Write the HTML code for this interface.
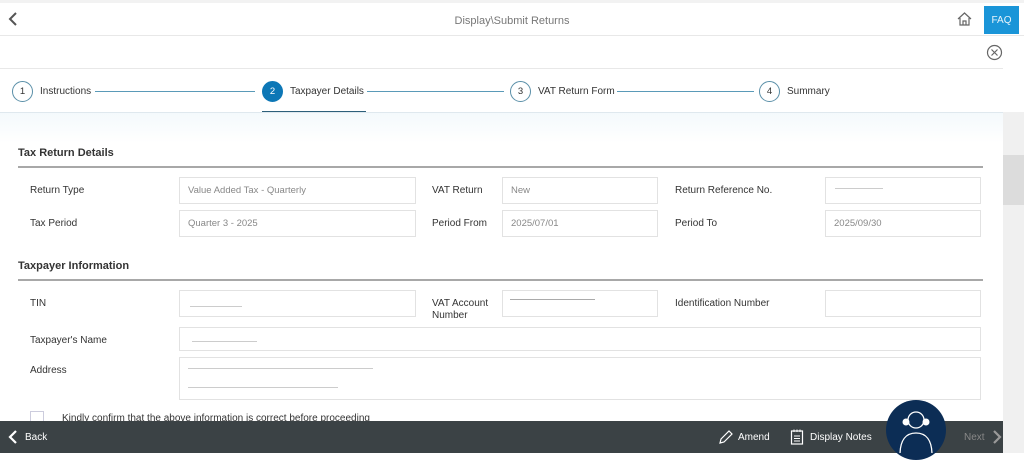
<!DOCTYPE html><html><head><style>
*{box-sizing:border-box;margin:0;padding:0}
body{width:1024px;height:453px;overflow:hidden;background:#fff;font-family:"Liberation Sans",sans-serif;position:relative;color:#333}
.a{position:absolute}
.lbl{position:absolute;font-size:10px;color:#333;line-height:12px}
.in{position:absolute;border:1px solid #e2e2e2;background:#fff;font-size:9.5px;color:#888;padding-left:8px;display:flex;align-items:center}
.h{position:absolute;font-size:11px;font-weight:bold;color:#333}
.ln{position:absolute;left:18px;width:965px;height:2px;background:#a8a8a8}
.step{position:absolute;top:81px;font-size:10px;color:#333;display:flex;align-items:center}
.c{width:21px;height:21px;border-radius:50%;border:1px solid #5a8fa8;display:flex;align-items:center;justify-content:center;font-size:9.5px;margin-right:7px;background:#fff}
.sl{position:absolute;top:91px;height:1px;background:#5a9ab8}
.blur{position:absolute;height:1px;background:#ccc}
</style></head><body>
<div class="a" style="left:0;top:0;width:1024px;height:3px;background:#f2f2f2"></div>
<div class="a" style="left:0;top:35px;width:1024px;height:1px;background:#e8e8e8"></div>
<svg class="a" style="left:7px;top:11px" width="12" height="16"><path d="M9 2L3 8L9 14" stroke="#555" stroke-width="2" fill="none"/></svg>
<div class="a" style="left:0;width:1024px;top:15px;text-align:center;font-size:11px;color:#777">Display\Submit Returns</div>
<svg class="a" style="left:956px;top:11px" width="17" height="16"><path d="M2 8L8.5 2L15 8M4 7V14H13V7M7 14V10H10V14" stroke="#666" stroke-width="1.2" fill="none"/></svg>
<div class="a" style="left:984px;top:6px;width:35px;height:28px;background:#1a95d8;color:#e8f4fb;font-size:10px;display:flex;align-items:center;justify-content:center">FAQ</div>
<div class="a" style="left:0;top:68px;width:1003px;height:1px;background:#e8e8e8"></div>
<svg class="a" style="left:986px;top:44px" width="17" height="17"><circle cx="8.5" cy="8.5" r="7" stroke="#666" stroke-width="1.2" fill="none"/><path d="M5.5 5.5L11.5 11.5M11.5 5.5L5.5 11.5" stroke="#666" stroke-width="1.2"/></svg>
<div class="sl" style="left:95px;width:160px"></div>
<div class="sl" style="left:367px;width:137px"></div>
<div class="sl" style="left:617px;width:137px"></div>
<div class="step" style="left:12px"><div class="c">1</div>Instructions</div>
<div class="step" style="left:262px"><div class="c" style="background:#0d77b6;border-color:#0d77b6;color:#fff">2</div>Taxpayer Details</div>
<div class="step" style="left:510px"><div class="c">3</div>VAT Return Form</div>
<div class="step" style="left:759px"><div class="c">4</div>Summary</div>
<div class="a" style="left:262px;top:111px;width:104px;height:2px;background:#2d5f7a"></div>
<div class="a" style="left:0;top:112px;width:1003px;height:1px;background:#dfe8ee"></div>
<div class="a" style="left:0;top:113px;width:1003px;height:30px;background:linear-gradient(#f4f9fc,#fff)"></div>
<div class="a" style="left:1003px;top:112px;width:21px;height:309px;background:#f0f0f0"></div>
<div class="a" style="left:1003px;top:155px;width:21px;height:50px;background:#dcdcdc"></div>
<div class="h" style="left:18px;top:147px">Tax Return Details</div>
<div class="ln" style="top:166px"></div>
<div class="lbl" style="left:30px;top:185px">Return Type</div>
<div class="in" style="left:179px;top:177px;width:237px;height:27px">Value Added Tax - Quarterly</div>
<div class="lbl" style="left:432px;top:185px">VAT Return</div>
<div class="in" style="left:502px;top:177px;width:156px;height:27px">New</div>
<div class="lbl" style="left:675px;top:185px">Return Reference No.</div>
<div class="in" style="left:825px;top:177px;width:156px;height:27px"></div>
<div class="blur" style="left:835px;top:188px;width:48px"></div>
<div class="lbl" style="left:30px;top:218px">Tax Period</div>
<div class="in" style="left:179px;top:210px;width:237px;height:27px">Quarter 3 - 2025</div>
<div class="lbl" style="left:432px;top:218px">Period From</div>
<div class="in" style="left:502px;top:210px;width:156px;height:27px">2025/07/01</div>
<div class="lbl" style="left:675px;top:218px">Period To</div>
<div class="in" style="left:825px;top:210px;width:156px;height:27px">2025/09/30</div>
<div class="h" style="left:18px;top:260px">Taxpayer Information</div>
<div class="ln" style="top:279px"></div>
<div class="lbl" style="left:30px;top:298px">TIN</div>
<div class="in" style="left:179px;top:290px;width:237px;height:27px"></div>
<div class="blur" style="left:190px;top:306px;width:52px"></div>
<div class="lbl" style="left:432px;top:298px">VAT Account<br>Number</div>
<div class="in" style="left:502px;top:290px;width:156px;height:27px"></div>
<div class="blur" style="left:510px;top:299px;width:85px;background:#aaa"></div>
<div class="lbl" style="left:675px;top:298px">Identification Number</div>
<div class="in" style="left:825px;top:290px;width:156px;height:27px"></div>
<div class="lbl" style="left:30px;top:335px">Taxpayer's Name</div>
<div class="in" style="left:179px;top:327px;width:802px;height:24px"></div>
<div class="blur" style="left:192px;top:341px;width:65px"></div>
<div class="lbl" style="left:30px;top:365px">Address</div>
<div class="in" style="left:179px;top:357px;width:802px;height:43px"></div>
<div class="blur" style="left:188px;top:368px;width:185px"></div>
<div class="blur" style="left:188px;top:387px;width:150px"></div>
<div class="a" style="left:30px;top:411px;width:14px;height:12px;border:1px solid #ccd;background:#fff"></div>
<div class="a" style="left:62px;top:413px;font-size:10px;color:#333">Kindly confirm that the above information is correct before proceeding</div>
<div class="a" style="left:0;top:421px;width:1003px;height:32px;background:#3b4245"></div>
<svg class="a" style="left:7px;top:429px" width="12" height="16"><path d="M9 2L3 8L9 14" stroke="#fff" stroke-width="2.2" fill="none"/></svg>
<div class="a" style="left:25px;top:432px;font-size:10px;color:#fff">Back</div>
<svg class="a" style="left:718px;top:429px" width="16" height="16"><path d="M2 14L3 10L11 2L14 5L6 13Z" stroke="#fff" stroke-width="1.2" fill="none"/></svg>
<div class="a" style="left:738px;top:432px;font-size:10px;color:#fff">Amend</div>
<svg class="a" style="left:790px;top:428px" width="14" height="18"><rect x="1.5" y="3" width="11" height="13" stroke="#fff" stroke-width="1.2" fill="none"/><path d="M4 1.5V4M7 1.5V4M10 1.5V4M4 8H10M4 10.5H10M4 13H10" stroke="#fff" stroke-width="1"/></svg>
<div class="a" style="left:810px;top:432px;font-size:10px;color:#fff">Display Notes</div>
<div class="a" style="left:886px;top:400px;width:60px;height:60px;border-radius:50%;background:#0c2d55"></div>
<svg class="a" style="left:886px;top:400px" width="60" height="53"><circle cx="30" cy="20" r="8" stroke="#fff" stroke-width="1.3" fill="none"/><circle cx="20" cy="22" r="3.5" fill="#fff"/><circle cx="40" cy="22" r="3.5" fill="#fff"/><path d="M14 55C14 40 20 33 30 33C40 33 46 40 46 55" stroke="#fff" stroke-width="1.3" fill="none"/></svg>
<div class="a" style="left:964px;top:432px;font-size:10px;color:#888">Next</div>
<svg class="a" style="left:991px;top:429px" width="12" height="16"><path d="M3 2L9 8L3 14" stroke="#999" stroke-width="2.2" fill="none"/></svg>
<div class="a" style="left:1003px;top:421px;width:21px;height:32px;background:#f0f0f0"></div>
</body></html>
